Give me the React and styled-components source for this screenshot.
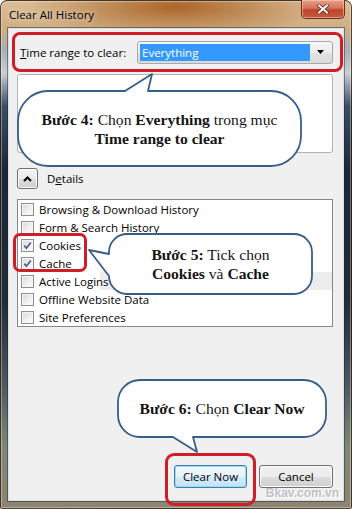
import React from 'react';
import styled, { createGlobalStyle } from 'styled-components';

const GlobalStyle = createGlobalStyle`
  html, body {
    margin: 0;
    padding: 0;
    background: #ffffff;
  }
  body {
    width: 352px;
    height: 509px;
    overflow: hidden;
  }
`;

const UI_FONT = `"Open Sans", "Noto Sans", "DejaVu Sans", sans-serif`;
const RED = '#cc1f28';

const Window = styled.div`
  box-sizing: border-box;
  width: 352px;
  height: 509px;
  display: flex;
  flex-direction: column;
  padding: 0 7px 7px 7px;
  border: 1px solid rgba(40, 28, 16, 0.75);
  border-radius: 7px 7px 2px 2px;
  background:
    radial-gradient(ellipse 150px 30px at 175px 6px, rgba(165, 92, 28, 0.9), rgba(165, 92, 28, 0) 100%),
    linear-gradient(180deg, #dcbd95 0px, #cfae84 28px, #a9afb5 50px, #c9d0d6 72px, #3d4d62 105px, #1c2736 170px, #222c38 300px, #4d545d 380px, #7f8676 445px, #8d8572 509px);
  box-shadow: inset 0 0 0 1px rgba(255, 255, 255, 0.35);
  font-family: ${UI_FONT};
`;

const TitleBar = styled.div`
  height: 27px;
  display: flex;
  align-items: center;
  justify-content: space-between;
  padding-left: 1px;
  flex: none;
`;

const Title = styled.span`
  font-size: 11.5px;
  color: #000;
  text-shadow: 0 0 6px rgba(255, 255, 255, 0.9);
`;

const CloseButton = styled.div`
  box-sizing: border-box;
  align-self: flex-start;
  margin-top: -1px;
  margin-right: -1px;
  width: 44px;
  height: 19px;
  border: 1px solid #6e2a18;
  border-top: none;
  border-radius: 0 0 5px 5px;
  background: linear-gradient(180deg, #e6a08a 0%, #d4735a 45%, #bd452c 55%, #c6593c 100%);
  box-shadow: inset 0 0 0 1px rgba(255, 210, 190, 0.55);
  display: flex;
  align-items: center;
  justify-content: center;
`;

const Client = styled.div`
  position: relative;
  flex: 1;
  display: flex;
  flex-direction: column;
  padding: 3px 10px 0 8px;
  background: #f0f0f0;
  border: 1px solid #d9dee4;
  box-shadow: 0 0 0 1px rgba(20, 30, 40, 0.45);
`;

const RangeBox = styled.div`
  display: flex;
  align-items: center;
  height: 34px;
  margin: 0 -10px 0 -5px;
  padding: 0 7px 0 5px;
  border: 3px solid ${RED};
  border-radius: 8px;
`;

const Label = styled.span`
  font-size: 11.5px;
  color: #000;
`;

const Select = styled.div`
  box-sizing: border-box;
  margin-left: auto;
  width: 196px;
  height: 23px;
  display: flex;
  align-items: center;
  padding: 2px;
  border: 1px solid #a9a9a9;
  border-radius: 3px;
  background: linear-gradient(180deg, #f6f6f6 0%, #ececec 50%, #e2e2e2 51%, #dadada 100%);
`;

const SelectValue = styled.span`
  flex: 1;
  height: 17px;
  display: flex;
  align-items: center;
  padding-left: 2px;
  background: #3399ff;
  color: #fff;
  font-size: 11.5px;
`;

const SelectArrow = styled.span`
  width: 20px;
  display: flex;
  justify-content: center;
`;

const PreviewBox = styled.div`
  height: 77px;
  margin-top: 2px;
  background: #fff;
  border: 1px solid #b2b2b2;
  border-radius: 3px;
  flex: none;
`;

const DetailsRow = styled.div`
  display: flex;
  align-items: center;
  gap: 9px;
  margin-top: 15px;
  flex: none;
`;

const ToggleButton = styled.span`
  box-sizing: border-box;
  width: 21px;
  height: 21px;
  display: flex;
  align-items: center;
  justify-content: center;
  border: 1px solid #707070;
  border-radius: 3px;
  background: linear-gradient(180deg, #f4f4f4 0%, #ebebeb 50%, #dddddd 51%, #cfcfcf 100%);
  box-shadow: inset 0 0 0 1px #fbfbfb;
`;

const ListBox = styled.div`
  position: relative;
  margin-top: 10px;
  background: #fff;
  border: 1px solid #828790;
  flex: none;
`;

const Row = styled.div`
  height: 18px;
  display: flex;
  align-items: center;
  gap: 5px;
  padding-left: 3px;
  font-size: 11.5px;
  color: #000;
  background: ${p => (p.$hover ? 'linear-gradient(90deg, #fff 82px, #ededed 82px)' : 'transparent')};
`;

const Box = styled.span`
  box-sizing: border-box;
  width: 13px;
  height: 13px;
  flex: none;
  display: flex;
  align-items: center;
  justify-content: center;
  border: 1px solid #8e8f8f;
  background: linear-gradient(135deg, #d6d6d6 0%, #f2f2f2 60%, #fbfbfb 100%);
  box-shadow: inset 0 0 0 1px #f6f6f6;
`;

const Highlight = styled.div`
  position: absolute;
  left: ${p => p.$x}px;
  top: ${p => p.$y}px;
  width: ${p => p.$w}px;
  height: ${p => p.$h}px;
  box-sizing: border-box;
  border: 3px solid ${RED};
  border-radius: 7px;
  pointer-events: none;
`;

const ButtonBar = styled.div`
  margin-top: auto;
  margin-bottom: 12px;
  display: flex;
  justify-content: flex-end;
  gap: 12px;
`;

const Marked = styled.span`
  position: relative;
  display: flex;

  &::after {
    content: '';
    position: absolute;
    top: -12px;
    left: -9px;
    right: -9px;
    bottom: -18px;
    border: 3px solid ${RED};
    border-radius: 9px;
  }
`;

const Button = styled.button`
  box-sizing: border-box;
  width: ${p => p.$w}px;
  height: 23px;
  padding: 0;
  font-family: ${UI_FONT};
  font-size: 11.5px;
  color: #000;
  border-radius: 3px;
  border: 1px solid ${p => (p.$primary ? '#3c7fb1' : '#707070')};
  background: ${p =>
    p.$primary
      ? 'linear-gradient(180deg, #f1f8fd 0%, #e6f3fb 50%, #d4ebf8 51%, #c3e2f5 100%)'
      : 'linear-gradient(180deg, #f2f2f2 0%, #ebebeb 50%, #dddddd 51%, #cfcfcf 100%)'};
  box-shadow: inset 0 0 0 1px ${p => (p.$primary ? '#9cd9f3' : '#fcfcfc')};
`;

const Watermark = styled.span`
  position: absolute;
  right: 4px;
  bottom: 0;
  font-family: "Liberation Sans", Arial, sans-serif;
  font-weight: bold;
  font-size: 12px;
  line-height: 14px;
  color: #bfc3c7;
  text-shadow: 1px 1px 0 #ffffff;
`;

const Callout = styled.div`
  position: absolute;
  left: ${p => p.$x}px;
  top: ${p => p.$y}px;
  width: ${p => p.$w}px;
  height: ${p => p.$h}px;
`;

const Shape = styled.svg`
  position: absolute;
  left: 0;
  top: 0;
  overflow: visible;
`;

const CalloutText = styled.div`
  position: absolute;
  left: ${p => p.$bx}px;
  top: ${p => p.$by}px;
  width: ${p => p.$bw}px;
  height: ${p => p.$bh}px;
  display: flex;
  flex-direction: column;
  align-items: center;
  justify-content: center;
  font-family: "Liberation Serif", "Times New Roman", serif;
  font-size: 15.6px;
  line-height: 19px;
  color: #151515;
  text-align: center;
  white-space: nowrap;
`;

const Check = () => (
  <svg width="9" height="9" viewBox="0 0 9 9">
    <path d="M1.3 4.6 L3.4 7.2 L7.8 1.4" fill="none" stroke="#4a5d8c" strokeWidth="1.7" />
  </svg>
);

const items = [
  { label: 'Browsing & Download History' },
  { label: 'Form & Search History' },
  { label: 'Cookies', checked: true },
  { label: 'Cache', checked: true },
  { label: 'Active Logins', hover: true },
  { label: 'Offline Website Data' },
  { label: 'Site Preferences' },
];

const callouts = [
  {
    x: 8, y: 44, w: 285, h: 94,
    body: { x: 1, y: 18, w: 283, h: 75 },
    d: 'M31 18 L108 18 L135 1 L131 18 L254 18 A30 30 0 0 1 284 48 L284 63 A30 30 0 0 1 254 93 L31 93 A30 30 0 0 1 1 63 L1 48 A30 30 0 0 1 31 18 Z',
    lines: [
      <><b>Bước 4:</b> Chọn <b>Everything</b> trong mục</>,
      <b>Time range to clear</b>,
    ],
  },
  {
    x: 79, y: 204, w: 225, h: 62,
    body: { x: 21, y: 1, w: 203, h: 60 },
    d: 'M39 1 L206 1 A18 18 0 0 1 224 19 L224 43 A18 18 0 0 1 206 61 L39 61 A18 18 0 0 1 21 43 L1 17 L21 21 L21 19 A18 18 0 0 1 39 1 Z',
    lines: [
      <><b>Bước 5:</b> Tick chọn</>,
      <><b>Cookies</b> và <b>Cache</b></>,
    ],
  },
  {
    x: 108, y: 350, w: 210, h: 74,
    body: { x: 1, y: 1, w: 208, h: 57 },
    d: 'M23 1 L187 1 A22 22 0 0 1 209 23 L209 36 A22 22 0 0 1 187 58 L76 58 L80 73 L56 58 L23 58 A22 22 0 0 1 1 36 L1 23 A22 22 0 0 1 23 1 Z',
    lines: [
      <><b>Bước 6:</b> Chọn <b>Clear Now</b></>,
    ],
  },
];

export default function App() {
  return (
    <>
      <GlobalStyle />
      <Window>
        <TitleBar>
          <Title>Clear All History</Title>
          <CloseButton>
            <svg width="12" height="10" viewBox="0 0 12 10">
              <path d="M2 1.5 L10 8.5 M10 1.5 L2 8.5" stroke="#5a1a0c" strokeWidth="3.4" strokeLinecap="square" />
              <path d="M2 1.5 L10 8.5 M10 1.5 L2 8.5" stroke="#ffffff" strokeWidth="2" strokeLinecap="square" />
            </svg>
          </CloseButton>
        </TitleBar>

        <Client>
          <RangeBox>
            <Label><u>T</u>ime range to clear:</Label>
            <Select>
              <SelectValue>Everything</SelectValue>
              <SelectArrow>
                <svg width="7" height="4" viewBox="0 0 7 4">
                  <path d="M0 0 H7 L3.5 4 Z" fill="#000" />
                </svg>
              </SelectArrow>
            </Select>
          </RangeBox>

          <PreviewBox />

          <DetailsRow>
            <ToggleButton>
              <svg width="9" height="6" viewBox="0 0 9 6">
                <path d="M1 5 L4.5 1.5 L8 5" fill="none" stroke="#000" strokeWidth="2" />
              </svg>
            </ToggleButton>
            <Label>D<u>e</u>tails</Label>
          </DetailsRow>

          <ListBox>
            {items.map(item => (
              <Row key={item.label} $hover={item.hover}>
                <Box>{item.checked && <Check />}</Box>
                {item.label}
              </Row>
            ))}
          </ListBox>

          <ButtonBar>
            <Marked>
              <Button $w={73} $primary>Clear Now</Button>
            </Marked>
            <Button $w={74}>Cancel</Button>
          </ButtonBar>

          <Highlight $x={4} $y={204} $w={74} $h={39} />

          {callouts.map((c, i) => (
            <Callout key={i} $x={c.x} $y={c.y} $w={c.w} $h={c.h}>
              <Shape width={c.w} height={c.h} viewBox={`0 0 ${c.w} ${c.h}`}>
                <path d={c.d} fill="#ffffff" stroke="#385d8a" strokeWidth="1.8" strokeLinejoin="round" />
              </Shape>
              <CalloutText $bx={c.body.x} $by={c.body.y} $bw={c.body.w} $bh={c.body.h}>
                {c.lines.map((line, j) => (
                  <span key={j}>{line}</span>
                ))}
              </CalloutText>
            </Callout>
          ))}

          <Watermark>Bkav.com.vn</Watermark>
        </Client>
      </Window>
    </>
  );
}
